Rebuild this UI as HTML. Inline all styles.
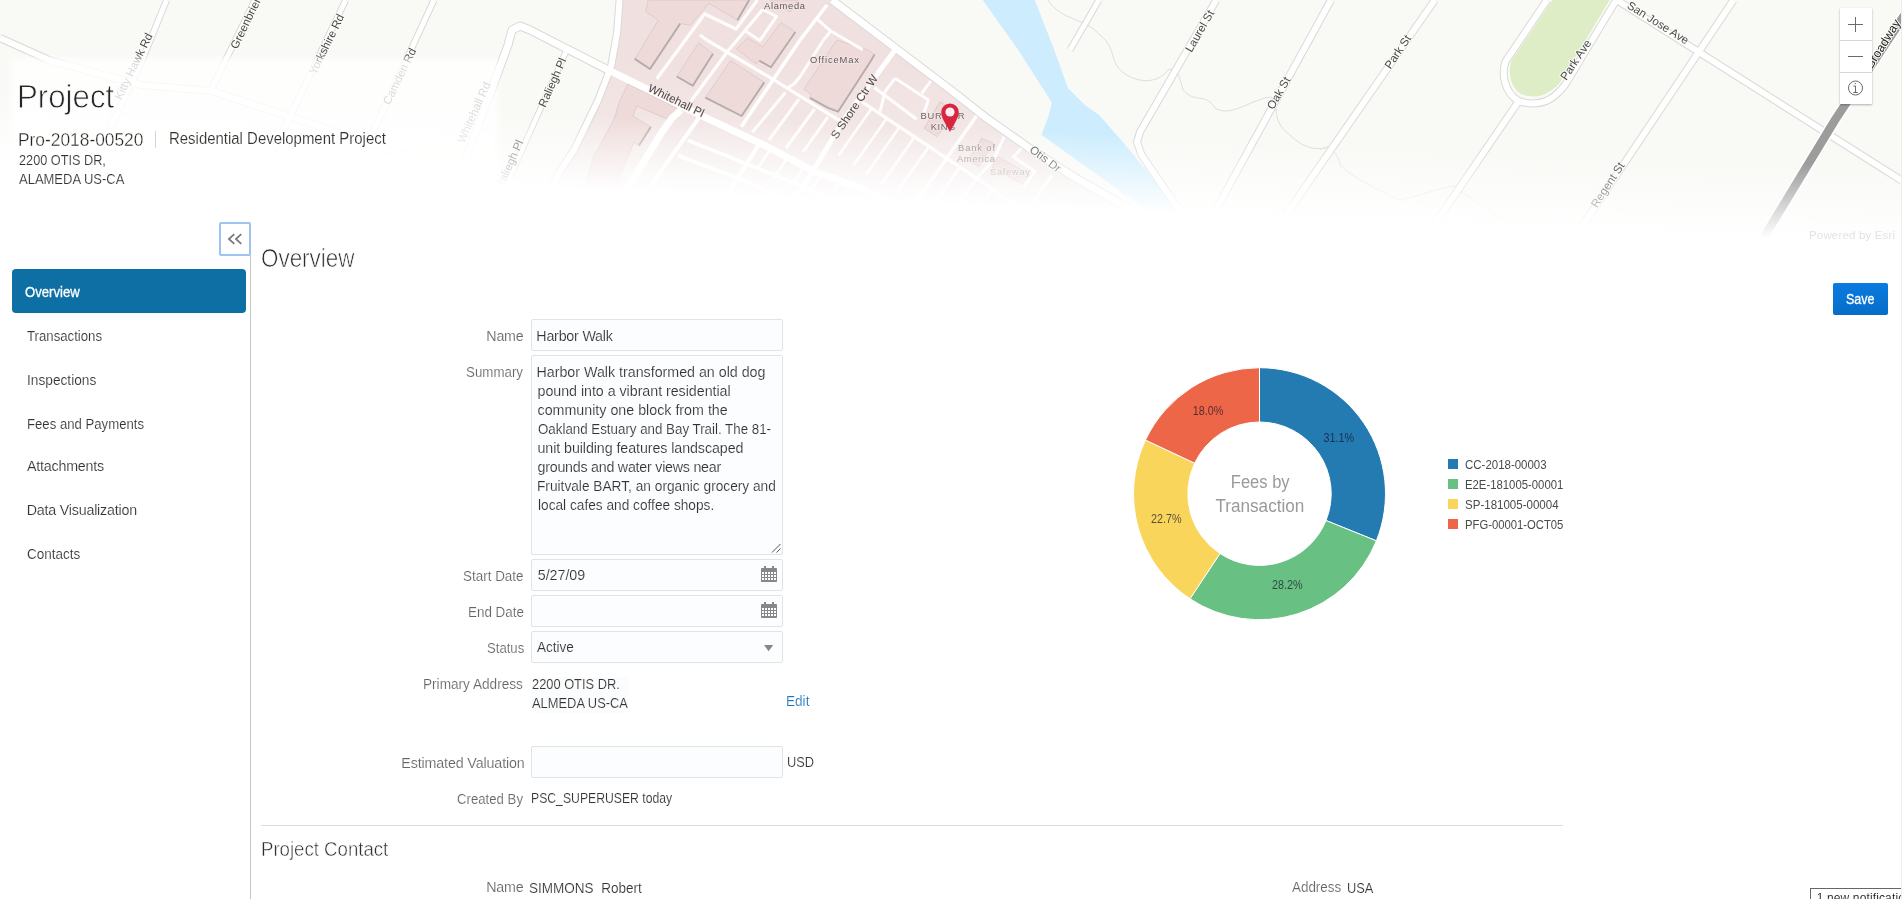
<!DOCTYPE html>
<html lang="en"><head><meta charset="utf-8"><title>Project</title>
<style>
html,body{margin:0;padding:0;background:#fff}
body{width:1902px;height:899px;overflow:hidden;position:relative;font-family:"Liberation Sans", Arial, sans-serif;font-size:14px;color:#333}
.t{position:absolute;white-space:pre;line-height:normal;transform-origin:0 50%}
.t{-webkit-text-stroke:0.15px #fff;paint-order:fill stroke}
#t_proid{-webkit-text-stroke-width:0.35px}
.t.thin{-webkit-text-stroke:0.8px #fff;paint-order:fill stroke}
#h_over{-webkit-text-stroke-width:0.65px}
#h_pc{-webkit-text-stroke-width:0.5px}
.t.semi{-webkit-text-stroke:0.3px currentColor}

#map{position:absolute;left:0;top:0}
#titlebg{position:absolute;left:15px;top:63px;width:478px;height:160px;background:rgba(255,255,255,.8);box-shadow:0 0 6px 5px rgba(255,255,255,.8)}
#sep{position:absolute;left:155px;top:131px;width:1px;height:17px;background:#c9d8e6}
#zoomctl{position:absolute;left:1840px;top:8px;width:32px;height:96px;background:#fff;box-shadow:0 1px 2px rgba(0,0,0,.3)}
#zoomctl div{position:absolute;left:0;width:32px;height:1px;background:#d6d6d6}
#zoomctl svg{position:absolute;left:0;top:0}
#collapse{position:absolute;left:219.2px;top:222px;width:27.8px;height:29.9px;border:2px solid #9dc4f1;border-radius:2px;background:#fff}
#vline{position:absolute;left:250px;top:255px;width:1px;height:644px;background:#c6c6c6}
#navsel{position:absolute;left:12px;top:269px;width:234px;height:44px;border-radius:4px;background:#0e6fa5}
.box{position:absolute;left:531px;width:250px;height:30px;border:1px solid #dfe4e7;border-radius:2px;background:#fcfdfe}
.cal{position:absolute;left:229px;top:6px}
#addrbg{position:absolute;left:531px;top:677px;width:98px;height:36px;background:#fbfcfd}
#hr{position:absolute;left:261px;top:825px;width:1302px;height:1px;background:#d6dfe6}
#save{position:absolute;left:1833px;top:283px;width:55px;height:32px;border-radius:2px;background:linear-gradient(#0a7be0,#066dc8)}
#chart{position:absolute;left:1100px;top:340px}
#notif{position:absolute;left:1810px;top:888px;width:120px;height:30px;border:1px solid #666;background:#fff}
#redge{position:absolute;left:1901px;top:0;width:1px;height:899px;background:#eee}
#page{position:absolute;left:0;top:0;width:1902px;height:899px;overflow:hidden;will-change:transform;background:#fff}
</style></head><body><div id="page">
<svg id="map" width="1902" height="250" viewBox="0 0 1902 250">
<defs><linearGradient id="fade" gradientUnits="userSpaceOnUse" x1="500" y1="110" x2="500" y2="186"><stop offset="0" stop-color="#fff" stop-opacity="0"/><stop offset="1" stop-color="#fff" stop-opacity="1"/></linearGradient>
<linearGradient id="pinkg" gradientUnits="userSpaceOnUse" x1="0" y1="60" x2="0" y2="200"><stop offset="0" stop-color="#f0e1e0"/><stop offset="1" stop-color="#f5ecec"/></linearGradient>
</defs>
<rect width="1902" height="250" fill="#f9faf6"/>
<polygon points="619.6,0.0 832.0,0.0 950.8,90.0 987.7,118.9 1029.0,148.0 1073.7,176.7 1120.0,203.5 1190.0,240.0 1190.0,250.0 520.0,250.0 560.0,171.0 574.0,150.0 597.8,101.0 611.0,67.0 617.0,33.6" fill="url(#pinkg)"/>
<polygon points="982.7,0.0 1018.7,50.7 1052.0,102.8 1048.0,117.5 1041.4,134.8 1098.9,176.0 1147.0,211.0 1200.0,250.0 1215.0,250.0 1173.6,203.0 1147.0,171.0 1120.0,138.8 1098.9,114.8 1085.5,105.5 1068.0,88.0 1053.5,48.0 1034.8,0.0" fill="#cdedfe"/>
<path d="M1552.3 0 L1511 61.4 C1508 72 1510 86 1520 93.5 C1530 98 1541 97 1547 93 C1553 90 1557 86 1560 82.8 L1609.7 0 Z" fill="#deedc6"/>
<path d="M1048 0 C1060 20 1085 18 1100 35 C1118 50 1108 62 1125 74 C1145 86 1160 80 1168 70 C1178 66 1180 80 1183 90 C1195 104 1205 92 1215 108 C1230 118 1250 100 1270 97 C1282 100 1268 120 1290 135 C1305 150 1320 152 1340 144" fill="none" stroke="#deded9" stroke-width="1"/>
<path d="M1320 150 C1330 140 1340 158 1340 165 C1355 180 1380 190 1400 200 C1420 195 1440 188 1455 186 C1470 200 1490 210 1510 222" fill="none" stroke="#e4e4df" stroke-width="1"/>
<path d="M166.6 0.0 L141.0 63.0 L111.0 126.0 L60.0 235.0" fill="none" stroke="#d9d9d6" stroke-width="7.0" stroke-linejoin="round"/>
<path d="M255.0 0.0 L212.0 88.0" fill="none" stroke="#d9d9d6" stroke-width="7.0" stroke-linejoin="round"/>
<path d="M345.7 0.0 L292.7 111.0 L240.0 222.0" fill="none" stroke="#d9d9d6" stroke-width="7.0" stroke-linejoin="round"/>
<path d="M434.0 0.0 L373.5 131.0 L330.0 225.0" fill="none" stroke="#d9d9d6" stroke-width="7.0" stroke-linejoin="round"/>
<path d="M0.0 38.0 L50.0 60.5 L141.0 85.0 L212.0 91.0 L303.0 121.0 L420.0 160.0" fill="none" stroke="#d9d9d6" stroke-width="8.0" stroke-linejoin="round"/>
<path d="M485.0 107.7 L508.0 45.0 L512.0 30.0 L520.0 26.0 L530.0 30.0 L609.5 70.7" fill="none" stroke="#d9d9d6" stroke-width="9.0" stroke-linejoin="round"/>
<path d="M485.0 107.7 L440.0 225.0" fill="none" stroke="#d9d9d6" stroke-width="8.0" stroke-linejoin="round"/>
<path d="M565.8 52.0 L522.0 150.0 L495.0 210.0" fill="none" stroke="#d9d9d6" stroke-width="6.5" stroke-linejoin="round"/>
<path d="M1216.3 0.0 L1140.0 132.0 L1137.0 142.0 L1141.6 155.0 L1181.6 213.6 L1210.0 250.0" fill="none" stroke="#d9d9d6" stroke-width="8.0" stroke-linejoin="round"/>
<path d="M1098.9 0.0 L1070.0 50.0" fill="none" stroke="#d9d9d6" stroke-width="7.0" stroke-linejoin="round"/>
<path d="M1331.0 0.0 L1213.7 213.6 L1195.0 250.0" fill="none" stroke="#d9d9d6" stroke-width="8.0" stroke-linejoin="round"/>
<path d="M1434.8 0.0 L1320.0 165.5 L1262.0 250.0" fill="none" stroke="#d9d9d6" stroke-width="8.0" stroke-linejoin="round"/>
<path d="M1517.6 102.8 L1434.8 224.0 L1417.0 250.0" fill="none" stroke="#d9d9d6" stroke-width="8.0" stroke-linejoin="round"/>
<path d="M1733.5 0.0 L1581.7 227.0 L1566.0 250.0" fill="none" stroke="#d9d9d6" stroke-width="8.0" stroke-linejoin="round"/>
<path d="M1616.7 0.0 L1902.0 180.8" fill="none" stroke="#d9d9d6" stroke-width="8.0" stroke-linejoin="round"/>
<path d="M832.0 0.0 L950.8 90.0 L987.7 118.9 L1029.0 148.0 L1073.7 176.7 L1120.0 203.5 L1190.0 240.0" fill="none" stroke="#d9d9d6" stroke-width="9.0" stroke-linejoin="round"/>
<path d="M619.6 0.0 L617.0 33.6 L611.0 67.0 L597.8 101.0 L574.0 150.0 L560.0 171.0 L520.0 250.0" fill="none" stroke="#d9d9d6" stroke-width="8.0" stroke-linejoin="round"/>
<path d="M1547 0 L1505.6 61.4 C1501 75 1505 92 1517.6 100.5 C1528 105 1542 104 1550 99 C1557 95 1561 90 1565 85 L1616.4 0" fill="none" stroke="#d9d9d6" stroke-width="8"/>
<path d="M166.6 0.0 L141.0 63.0 L111.0 126.0 L60.0 235.0" fill="none" stroke="#fff" stroke-width="5.0" stroke-linejoin="round"/>
<path d="M255.0 0.0 L212.0 88.0" fill="none" stroke="#fff" stroke-width="5.0" stroke-linejoin="round"/>
<path d="M345.7 0.0 L292.7 111.0 L240.0 222.0" fill="none" stroke="#fff" stroke-width="5.0" stroke-linejoin="round"/>
<path d="M434.0 0.0 L373.5 131.0 L330.0 225.0" fill="none" stroke="#fff" stroke-width="5.0" stroke-linejoin="round"/>
<path d="M0.0 38.0 L50.0 60.5 L141.0 85.0 L212.0 91.0 L303.0 121.0 L420.0 160.0" fill="none" stroke="#fff" stroke-width="6.0" stroke-linejoin="round"/>
<path d="M485.0 107.7 L508.0 45.0 L512.0 30.0 L520.0 26.0 L530.0 30.0 L609.5 70.7" fill="none" stroke="#fff" stroke-width="7.0" stroke-linejoin="round"/>
<path d="M485.0 107.7 L440.0 225.0" fill="none" stroke="#fff" stroke-width="6.0" stroke-linejoin="round"/>
<path d="M565.8 52.0 L522.0 150.0 L495.0 210.0" fill="none" stroke="#fff" stroke-width="4.5" stroke-linejoin="round"/>
<path d="M1216.3 0.0 L1140.0 132.0 L1137.0 142.0 L1141.6 155.0 L1181.6 213.6 L1210.0 250.0" fill="none" stroke="#fff" stroke-width="6.0" stroke-linejoin="round"/>
<path d="M1098.9 0.0 L1070.0 50.0" fill="none" stroke="#fff" stroke-width="5.0" stroke-linejoin="round"/>
<path d="M1331.0 0.0 L1213.7 213.6 L1195.0 250.0" fill="none" stroke="#fff" stroke-width="6.0" stroke-linejoin="round"/>
<path d="M1434.8 0.0 L1320.0 165.5 L1262.0 250.0" fill="none" stroke="#fff" stroke-width="6.0" stroke-linejoin="round"/>
<path d="M1517.6 102.8 L1434.8 224.0 L1417.0 250.0" fill="none" stroke="#fff" stroke-width="6.0" stroke-linejoin="round"/>
<path d="M1733.5 0.0 L1581.7 227.0 L1566.0 250.0" fill="none" stroke="#fff" stroke-width="6.0" stroke-linejoin="round"/>
<path d="M1616.7 0.0 L1902.0 180.8" fill="none" stroke="#fff" stroke-width="6.0" stroke-linejoin="round"/>
<path d="M832.0 0.0 L950.8 90.0 L987.7 118.9 L1029.0 148.0 L1073.7 176.7 L1120.0 203.5 L1190.0 240.0" fill="none" stroke="#fff" stroke-width="7.0" stroke-linejoin="round"/>
<path d="M619.6 0.0 L617.0 33.6 L611.0 67.0 L597.8 101.0 L574.0 150.0 L560.0 171.0 L520.0 250.0" fill="none" stroke="#fff" stroke-width="6.0" stroke-linejoin="round"/>
<path d="M1547 0 L1505.6 61.4 C1501 75 1505 92 1517.6 100.5 C1528 105 1542 104 1550 99 C1557 95 1561 90 1565 85 L1616.4 0" fill="none" stroke="#fff" stroke-width="6"/>
<polygon points="730.7,60.6 764.3,82.4 741.6,116.0 705.4,97.6" fill="#eedad8" stroke="#d8c8c7" stroke-width="0.8"/>
<polygon points="836.8,40.0 868.0,50.0 874.6,54.5 870.0,62.2 838.0,111.7 828.0,107.9 810.0,97.8 811.0,94.5 804.0,89.0" fill="#eedad8" stroke="#d8c8c7" stroke-width="0.8"/>
<polygon points="781.0,22.7 795.4,32.0 771.0,67.3 759.3,60.6 756.0,64.0 736.6,48.8 747.5,37.9 762.6,47.0" fill="#eedad8" stroke="#d8c8c7" stroke-width="0.8"/>
<polygon points="648.2,0.0 645.7,11.8 658.3,20.2 634.8,58.9 650.0,69.0 680.2,23.6 690.3,25.2 708.8,3.4 737.4,20.2 749.2,0.0" fill="#eedad8" stroke="#d8c8c7" stroke-width="0.8"/>
<polygon points="698.7,42.9 713.0,53.8 692.8,85.8 676.8,76.5" fill="#eedad8" stroke="#d8c8c7" stroke-width="0.8"/>
<polygon points="628.0,84.0 680.0,109.4 672.0,121.0 636.5,106.0 633.0,116.0 650.8,127.0 639.0,145.4 634.0,142.0 616.0,185.0 585.0,185.0 593.6,157.0 614.6,118.0 619.6,101.0" fill="#eedad8" stroke="#d8c8c7" stroke-width="0.8"/>
<polygon points="770.0,0.0 790.0,12.0 798.0,0.0" fill="#eedad8" stroke="#d8c8c7" stroke-width="0.8"/>
<polygon points="940.0,101.7 956.7,111.7 936.7,136.7 924.2,128.3" fill="#eedad8" stroke="#d8c8c7" stroke-width="0.8"/>
<polygon points="981.7,138.3 993.3,143.3 978.3,166.7 968.3,160.0" fill="#eedad8" stroke="#d8c8c7" stroke-width="0.8"/>
<polygon points="998.3,156.7 1030.0,175.0 1023.3,185.0 991.7,166.7" fill="#eedad8" stroke="#d8c8c7" stroke-width="0.8"/>
<path d="M764.3 82.4 L741.6 116 L705.4 97.6" fill="none" stroke="#b7abab" stroke-width="1.9" stroke-linejoin="round"/>
<path d="M874.6 54.5 L870 62.2 L838 111.7 L828 107.9 L810 97.8" fill="none" stroke="#b7abab" stroke-width="1.9" stroke-linejoin="round"/>
<path d="M713 53.8 L692.8 85.8 L676.8 76.5" fill="none" stroke="#b7abab" stroke-width="1.9" stroke-linejoin="round"/>
<path d="M795.4 32 L771 67.3 L759.3 60.6" fill="none" stroke="#b7abab" stroke-width="1.9" stroke-linejoin="round"/>
<path d="M680.2 23.6 L650 69 L634.8 58.9" fill="none" stroke="#b7abab" stroke-width="1.9" stroke-linejoin="round"/>
<path d="M737.4 20.2 L749.2 0" fill="none" stroke="#b7abab" stroke-width="1.9" stroke-linejoin="round"/>
<path d="M650.8 127 L639 145.4" fill="none" stroke="#b7abab" stroke-width="1.9" stroke-linejoin="round"/>
<path d="M609.5 70.7 L698.7 114.4 L766.0 146.0 L812.4 170.7 L862.8 189.0 L940.0 230.0" fill="none" stroke="#fff" stroke-opacity="1" stroke-width="7.0" stroke-linejoin="round" stroke-linecap="butt"/>
<path d="M894.6 50.5 L843.5 120.0 L825.6 150.0 L799.0 194.0 L770.0 240.0" fill="none" stroke="#fff" stroke-opacity="1" stroke-width="5.0" stroke-linejoin="round" stroke-linecap="butt"/>
<path d="M706.7 40.0 L772.3 78.9 L836.8 119.0 L843.0 122.0" fill="none" stroke="#fff" stroke-opacity="0.88" stroke-width="3.3" stroke-linejoin="round" stroke-linecap="butt"/>
<path d="M700.0 35.0 L706.7 40.0" fill="none" stroke="#fff" stroke-opacity="0.88" stroke-width="3.3" stroke-linejoin="round" stroke-linecap="butt"/>
<path d="M800.1 40.0 L741.2 126.8" fill="none" stroke="#fff" stroke-opacity="1" stroke-width="3.5" stroke-linejoin="round" stroke-linecap="butt"/>
<path d="M827.0 5.0 L800.1 40.0" fill="none" stroke="#fff" stroke-opacity="1" stroke-width="3.5" stroke-linejoin="round" stroke-linecap="butt"/>
<path d="M823.5 40.0 L800.0 76.7 L794.0 84.0 L787.9 87.8" fill="none" stroke="#fff" stroke-opacity="0.88" stroke-width="3.0" stroke-linejoin="round" stroke-linecap="butt"/>
<path d="M830.7 31.0 L823.5 40.0" fill="none" stroke="#fff" stroke-opacity="0.88" stroke-width="3.0" stroke-linejoin="round" stroke-linecap="butt"/>
<path d="M815.5 17.7 L830.7 31.0 L862.6 49.6" fill="none" stroke="#fff" stroke-opacity="0.88" stroke-width="3.0" stroke-linejoin="round" stroke-linecap="butt"/>
<path d="M785.6 92.3 L752.3 132.3" fill="none" stroke="#fff" stroke-opacity="0.88" stroke-width="3.0" stroke-linejoin="round" stroke-linecap="butt"/>
<path d="M799.0 99.0 L769.0 140.0" fill="none" stroke="#fff" stroke-opacity="0.88" stroke-width="3.0" stroke-linejoin="round" stroke-linecap="butt"/>
<path d="M814.6 109.0 L786.0 148.0" fill="none" stroke="#fff" stroke-opacity="0.88" stroke-width="3.0" stroke-linejoin="round" stroke-linecap="butt"/>
<path d="M828.0 116.8 L803.0 152.0" fill="none" stroke="#fff" stroke-opacity="0.88" stroke-width="3.0" stroke-linejoin="round" stroke-linecap="butt"/>
<path d="M762.6 9.5 L727.3 51.7 L690.0 102.6" fill="none" stroke="#fff" stroke-opacity="0.88" stroke-width="3.3" stroke-linejoin="round" stroke-linecap="butt"/>
<path d="M703.8 15.0 L656.6 79.0" fill="none" stroke="#fff" stroke-opacity="0.88" stroke-width="3.3" stroke-linejoin="round" stroke-linecap="butt"/>
<path d="M703.3 13.2 L736.0 29.0 L757.5 0.0" fill="none" stroke="#fff" stroke-opacity="0.88" stroke-width="3.2" stroke-linejoin="round" stroke-linecap="butt"/>
<path d="M874.2 87.5 L916.7 119.2" fill="none" stroke="#fff" stroke-opacity="0.88" stroke-width="3.2" stroke-linejoin="round" stroke-linecap="butt"/>
<path d="M861.7 101.7 L946.7 158.3 L976.7 178.3 L1006.7 199.8 L1040.0 222.0" fill="none" stroke="#fff" stroke-opacity="0.88" stroke-width="3.4" stroke-linejoin="round" stroke-linecap="butt"/>
<path d="M699.6 116.8 L654.0 180.8 L620.0 240.0" fill="none" stroke="#fff" stroke-opacity="1" stroke-width="4.0" stroke-linejoin="round" stroke-linecap="butt"/>
<path d="M681.0 110.0 L672.0 118.0 L661.0 133.6 L632.0 180.8 L600.0 240.0" fill="none" stroke="#fff" stroke-opacity="1" stroke-width="7.0" stroke-linejoin="round" stroke-linecap="butt"/>
<path d="M687.9 140.4 L805.6 187.5 L880.0 225.0" fill="none" stroke="#fff" stroke-opacity="1" stroke-width="3.5" stroke-linejoin="round" stroke-linecap="butt"/>
<path d="M677.8 155.5 L745.0 180.8 L830.0 220.0" fill="none" stroke="#fff" stroke-opacity="1" stroke-width="3.5" stroke-linejoin="round" stroke-linecap="butt"/>
<path d="M758.5 145.4 L731.6 187.5 L700.0 240.0" fill="none" stroke="#fff" stroke-opacity="1" stroke-width="4.0" stroke-linejoin="round" stroke-linecap="butt"/>
<path d="M895.0 78.3 L928.3 100.0 L921.7 119.2" fill="none" stroke="#fff" stroke-opacity="0.88" stroke-width="3.0" stroke-linejoin="round" stroke-linecap="butt"/>
<path d="M895.0 78.3 L885.0 91.7 L880.0 111.7" fill="none" stroke="#fff" stroke-opacity="0.88" stroke-width="3.0" stroke-linejoin="round" stroke-linecap="butt"/>
<path d="M930.8 80.8 L921.7 93.3" fill="none" stroke="#fff" stroke-opacity="0.88" stroke-width="3.0" stroke-linejoin="round" stroke-linecap="butt"/>
<path d="M976.7 115.8 L946.7 158.3 L926.7 186.7 L910.0 210.0" fill="none" stroke="#fff" stroke-opacity="0.88" stroke-width="3.3" stroke-linejoin="round" stroke-linecap="butt"/>
<path d="M1004.2 136.7 L996.7 153.3 L990.0 164.0 L976.7 178.3" fill="none" stroke="#fff" stroke-opacity="0.88" stroke-width="3.0" stroke-linejoin="round" stroke-linecap="butt"/>
<path d="M1021.7 148.3 L1013.3 156.7 L1035.0 171.7 L1023.3 186.7" fill="none" stroke="#fff" stroke-opacity="0.88" stroke-width="3.0" stroke-linejoin="round" stroke-linecap="butt"/>
<path d="M1052.0 175.3 L1031.8 204.2" fill="none" stroke="#fff" stroke-opacity="0.88" stroke-width="3.0" stroke-linejoin="round" stroke-linecap="butt"/>
<path d="M762.6 9.5 L776.5 16.4 L760.0 40.4 L746.2 31.5" fill="none" stroke="#fff" stroke-opacity="0.88" stroke-width="3.0" stroke-linejoin="round" stroke-linecap="butt"/>
<path d="M871.7 108.3 L838.7 155.3" fill="none" stroke="#fff" stroke-opacity="0.88" stroke-width="2.6" stroke-linejoin="round" stroke-linecap="butt"/>
<path d="M886.7 118.3 L853.7 165.3" fill="none" stroke="#fff" stroke-opacity="0.88" stroke-width="2.6" stroke-linejoin="round" stroke-linecap="butt"/>
<path d="M899.2 127.5 L866.2 174.5" fill="none" stroke="#fff" stroke-opacity="0.88" stroke-width="2.6" stroke-linejoin="round" stroke-linecap="butt"/>
<path d="M914.2 137.5 L881.2 184.5" fill="none" stroke="#fff" stroke-opacity="0.88" stroke-width="2.6" stroke-linejoin="round" stroke-linecap="butt"/>
<path d="M928.3 147.5 L895.3 194.5" fill="none" stroke="#fff" stroke-opacity="0.88" stroke-width="2.6" stroke-linejoin="round" stroke-linecap="butt"/>
<path d="M959.2 168.3 L926.2 215.3" fill="none" stroke="#fff" stroke-opacity="0.88" stroke-width="2.6" stroke-linejoin="round" stroke-linecap="butt"/>
<path d="M976.7 178.3 L943.7 225.3" fill="none" stroke="#fff" stroke-opacity="0.88" stroke-width="2.6" stroke-linejoin="round" stroke-linecap="butt"/>
<path d="M992.0 189.0 L959.0 236.0" fill="none" stroke="#fff" stroke-opacity="0.88" stroke-width="2.6" stroke-linejoin="round" stroke-linecap="butt"/>
<path d="M770.0 150.0 L757.0 169.0" fill="none" stroke="#fff" stroke-opacity="0.88" stroke-width="2.6" stroke-linejoin="round" stroke-linecap="butt"/>
<path d="M787.0 158.5 L774.0 177.5" fill="none" stroke="#fff" stroke-opacity="0.88" stroke-width="2.6" stroke-linejoin="round" stroke-linecap="butt"/>
<path d="M804.0 167.0 L791.0 186.0" fill="none" stroke="#fff" stroke-opacity="0.88" stroke-width="2.6" stroke-linejoin="round" stroke-linecap="butt"/>
<path d="M821.0 175.5 L808.0 194.5" fill="none" stroke="#fff" stroke-opacity="0.88" stroke-width="2.6" stroke-linejoin="round" stroke-linecap="butt"/>
<path d="M838.0 184.0 L825.0 203.0" fill="none" stroke="#fff" stroke-opacity="0.88" stroke-width="2.6" stroke-linejoin="round" stroke-linecap="butt"/>
<path d="M1914 0 L1907 11.3 L1835 120 L1761 242 L1752 257" fill="none" stroke="#fff" stroke-width="11.5"/>
<path d="M1914 0 L1907 11.3 L1835 120 L1761 242 L1752 257" fill="none" stroke="#9c9c9c" stroke-width="8.6"/>
<g font-family="'Liberation Sans',Arial,sans-serif" style="paint-order:stroke" stroke="#fbfbf8" stroke-width="2" stroke-linejoin="round">
<text x="137.0" y="68.0" transform="rotate(-64.0 137.0 68.0)" font-size="11.5" fill="#4a4a4a" text-anchor="middle" opacity="1">Kitty Hawk Rd</text>
<text x="253.0" y="17.0" transform="rotate(-64.0 253.0 17.0)" font-size="11.5" fill="#4a4a4a" text-anchor="middle" opacity="1">Greenbrier Rd</text>
<text x="330.0" y="46.0" transform="rotate(-64.0 330.0 46.0)" font-size="11.5" fill="#4a4a4a" text-anchor="middle" opacity="1">Yorkshire Rd</text>
<text x="403.0" y="78.0" transform="rotate(-64.0 403.0 78.0)" font-size="11.5" fill="#4a4a4a" text-anchor="middle" opacity="1">Camden Rd</text>
<text x="477.5" y="114.0" transform="rotate(-66.0 477.5 114.0)" font-size="11.5" fill="#4a4a4a" text-anchor="middle" opacity="1">Whitehall Rd</text>
<text x="556.0" y="84.0" transform="rotate(-66.0 556.0 84.0)" font-size="11.5" fill="#4a4a4a" text-anchor="middle" opacity="1">Raliegh Pl</text>
<text x="513.0" y="166.0" transform="rotate(-66.0 513.0 166.0)" font-size="11.5" fill="#4a4a4a" text-anchor="middle" opacity="1">Raliegh Pl</text>
<text x="1203.0" y="33.0" transform="rotate(-60.0 1203.0 33.0)" font-size="11.5" fill="#4a4a4a" text-anchor="middle" opacity="1">Laurel St</text>
<text x="1282.0" y="95.0" transform="rotate(-60.0 1282.0 95.0)" font-size="11.5" fill="#4a4a4a" text-anchor="middle" opacity="1">Oak St</text>
<text x="1401.0" y="54.0" transform="rotate(-56.0 1401.0 54.0)" font-size="11.5" fill="#4a4a4a" text-anchor="middle" opacity="1">Park St</text>
<text x="1579.0" y="62.0" transform="rotate(-56.0 1579.0 62.0)" font-size="11.5" fill="#4a4a4a" text-anchor="middle" opacity="1">Park Ave</text>
<text x="1656.0" y="26.0" transform="rotate(32.0 1656.0 26.0)" font-size="11.5" fill="#4a4a4a" text-anchor="middle" opacity="1">San Jose Ave</text>
<text x="1611.0" y="187.0" transform="rotate(-57.0 1611.0 187.0)" font-size="11.5" fill="#4a4a4a" text-anchor="middle" opacity="1">Regent St</text>
<text x="1886.5" y="46.0" transform="rotate(-58.0 1886.5 46.0)" font-size="12.3" fill="#222" text-anchor="middle" opacity="1">Broadway</text>
<text x="1043.0" y="162.0" transform="rotate(37.0 1043.0 162.0)" font-size="11.5" fill="#4a4a4a" text-anchor="middle" opacity="1">Otis Dr</text>
</g>
<g font-family="'Liberation Sans',Arial,sans-serif" style="paint-order:stroke" stroke="#f6e6e5" stroke-width="1.5" stroke-linejoin="round">
<text x="674.5" y="104.0" transform="rotate(26.0 674.5 104.0)" font-size="11.5" fill="#4a4a4a" text-anchor="middle" opacity="1">Whitehall Pl</text>
<text x="857.5" y="109.0" transform="rotate(-56.0 857.5 109.0)" font-size="11.5" fill="#4a4a4a" text-anchor="middle" opacity="1">S Shore Ctr W</text>
<text x="784.5" y="8.6" font-size="9.4" fill="#5a5a5a" text-anchor="middle" textLength="41" lengthAdjust="spacing">Alameda</text>
<text x="834.5" y="62.5" font-size="9.4" fill="#5a5a5a" text-anchor="middle" textLength="49" lengthAdjust="spacing">OfficeMax</text>
<text x="942.5" y="118.8" font-size="9.4" fill="#6a6a6a" text-anchor="middle" textLength="44" lengthAdjust="spacing">BURGER</text>
<text x="943.0" y="129.5" font-size="9.4" fill="#6a6a6a" text-anchor="middle" textLength="24.5" lengthAdjust="spacing">KING</text>
<text x="976.5" y="150.8" font-size="9.4" fill="#8a8a8a" text-anchor="middle" textLength="37" lengthAdjust="spacing">Bank of</text>
<text x="976.0" y="161.6" font-size="9.4" fill="#8a8a8a" text-anchor="middle" textLength="38" lengthAdjust="spacing">America</text>
<text x="1010.0" y="174.6" font-size="9.4" fill="#9a9a9a" text-anchor="middle" textLength="40" lengthAdjust="spacing">Safeway</text>
</g>
<path d="M950 132 C946 124 941.2 118 941.2 112.3 A8.8 8.8 0 1 1 958.8 112.3 C958.8 118 954 124 950 132 Z" fill="#d8263f"/>
<circle cx="950" cy="112" r="4.6" fill="#fff" fill-opacity="0.92"/>
<rect x="-200" y="-100" width="2400" height="600" fill="url(#fade)" transform="rotate(2.35 500 186)"/>
<text x="1809" y="238.6" font-family="'Liberation Sans',Arial,sans-serif" font-size="11.5" fill="#e3e3e3" textLength="86">Powered by Esri</text>
</svg>
<div id="titlebg"></div>
<header>
<span id="t_project" class="t thin" style="left:17.45px;top:77.00px;font-size:33.8px;letter-spacing:0.000px;color:#262626;transform:scaleX(0.9239)">Project</span>
<span id="t_proid" class="t" style="left:17.75px;top:128.60px;font-size:18.3px;letter-spacing:0.000px;color:#222;transform:scaleX(0.9491)">Pro-2018-00520</span><div id="sep"></div><span id="t_rdp" class="t" style="left:168.54px;top:129.70px;font-size:15.6px;letter-spacing:0.000px;color:#333;transform:scaleX(0.9584)">Residential Development Project</span>
<span id="t_addr1" class="t" style="left:18.70px;top:151.70px;font-size:14.2px;letter-spacing:0.000px;color:#333;transform:scaleX(0.8954)">2200 OTIS DR,</span>
<span id="t_addr2" class="t" style="left:18.70px;top:170.70px;font-size:14.2px;letter-spacing:0.000px;color:#333;transform:scaleX(0.9156)">ALAMEDA US-CA</span>
</header>
<div id="zoomctl"><div style="top:32px"></div><div style="top:64px"></div>
<svg width="32" height="96" viewBox="0 0 32 96" fill="none" stroke="#6a6a6a" stroke-width="1"><path d="M8 16.5h15M15.5 9v15M8 48.5h15"/><circle cx="15.5" cy="80" r="7"/><path d="M15.5 78v6M13.5 78h2M13.3 84.5h4.4" /><circle cx="15.4" cy="75.6" r="0.7" fill="#6a6a6a" stroke="none"/></svg></div>
<div id="collapse"><svg width="28" height="30" viewBox="0 0 28 30" style="position:absolute;left:0;top:0" fill="none" stroke="#777" stroke-width="1.7"><path d="M13.3 10.2L7.9 15l5.4 4.8M20.3 10.2l-5.4 4.8 5.4 4.8"/></svg></div>
<div id="vline"></div>
<nav>
<div id="navsel"></div>
<span id="n0" class="t semi" style="left:25.00px;top:283.80px;font-size:14.25px;letter-spacing:0.000px;color:#fff;transform:scaleX(0.9202)">Overview</span>
<span id="n1" class="t" style="left:26.90px;top:328.10px;font-size:14.25px;letter-spacing:0.000px;color:#333;transform:scaleX(0.9256)">Transactions</span>
<span id="n2" class="t" style="left:26.54px;top:372.40px;font-size:14.25px;letter-spacing:0.000px;color:#333;transform:scaleX(0.9611)">Inspections</span>
<span id="n3" class="t" style="left:26.78px;top:416.30px;font-size:14.25px;letter-spacing:0.000px;color:#333;transform:scaleX(0.9235)">Fees and Payments</span>
<span id="n4" class="t" style="left:26.90px;top:458.20px;font-size:14.25px;letter-spacing:-0.188px;color:#333">Attachments</span>
<span id="n5" class="t" style="left:26.70px;top:502.20px;font-size:14.25px;letter-spacing:-0.199px;color:#333">Data Visualization</span>
<span id="n6" class="t" style="left:26.90px;top:546.20px;font-size:14.25px;letter-spacing:0.000px;color:#333;transform:scaleX(0.9481)">Contacts</span>
</nav>
<main>
<span id="h_over" class="t thin" style="left:260.90px;top:243.80px;font-size:25px;letter-spacing:0.000px;color:#2e2e2e;transform:scaleX(0.8969)">Overview</span>
<div id="save"></div><span id="b_save" class="t semi" style="left:1845.90px;top:291.00px;font-size:14.25px;letter-spacing:0.000px;color:#fff;transform:scaleX(0.8785)">Save</span>
<div class="box" style="top:319px"></div><span id="l_name" class="t" style="left:486.30px;top:327.70px;font-size:14.25px;letter-spacing:-0.195px;color:#666">Name</span><span id="v_name" class="t" style="left:536.30px;top:327.70px;font-size:14.25px;letter-spacing:-0.203px;color:#333">Harbor Walk</span>
<div class="box" style="top:355px;height:198px"><svg width="10" height="10" viewBox="0 0 10 10" style="position:absolute;right:1px;bottom:1px" stroke="#555" stroke-width="1"><path d="M9.5 1L1 9.5M9.5 5.5L5.5 9.5"/></svg></div><span id="l_sum" class="t" style="left:466.00px;top:364.20px;font-size:14.25px;letter-spacing:0.000px;color:#666;transform:scaleX(0.9347)">Summary</span>
<span id="v_s1" class="t" style="left:536.50px;top:364.20px;font-size:14.25px;letter-spacing:-0.007px;color:#333">Harbor Walk transformed an old dog</span>
<span id="v_s2" class="t" style="left:537.50px;top:383.20px;font-size:14.25px;letter-spacing:-0.030px;color:#333">pound into a vibrant residential</span>
<span id="v_s3" class="t" style="left:537.50px;top:402.20px;font-size:14.25px;letter-spacing:0.005px;color:#333">community one block from the</span>
<span id="v_s4" class="t" style="left:537.50px;top:421.20px;font-size:14.25px;letter-spacing:0.000px;color:#333;transform:scaleX(0.9348)">Oakland Estuary and Bay Trail. The 81-</span>
<span id="v_s5" class="t" style="left:537.50px;top:440.20px;font-size:14.25px;letter-spacing:-0.076px;color:#333">unit building features landscaped</span>
<span id="v_s6" class="t" style="left:537.50px;top:459.20px;font-size:14.25px;letter-spacing:-0.236px;color:#333">grounds and water views near</span>
<span id="v_s7" class="t" style="left:536.54px;top:478.20px;font-size:14.25px;letter-spacing:0.000px;color:#333;transform:scaleX(0.9614)">Fruitvale BART, an organic grocery and</span>
<span id="v_s8" class="t" style="left:537.50px;top:497.20px;font-size:14.25px;letter-spacing:0.000px;color:#333;transform:scaleX(0.9602)">local cafes and coffee shops.</span>
<div class="box" style="top:559px"><svg class="cal" width="16" height="16" viewBox="0 0 16 16"><rect x="0" y="2" width="16" height="14" rx="0.8" fill="#858789"/><rect x="3" y="0" width="2" height="3" fill="#858789"/><rect x="11" y="0" width="2" height="3" fill="#858789"/><rect x="1" y="6" width="2" height="2" fill="#fcfdfe"/><rect x="4" y="6" width="2" height="2" fill="#fcfdfe"/><rect x="7" y="6" width="2" height="2" fill="#fcfdfe"/><rect x="10" y="6" width="2" height="2" fill="#fcfdfe"/><rect x="13" y="6" width="2" height="2" fill="#fcfdfe"/><rect x="1" y="9" width="2" height="2" fill="#fcfdfe"/><rect x="4" y="9" width="2" height="2" fill="#fcfdfe"/><rect x="7" y="9" width="2" height="2" fill="#fcfdfe"/><rect x="10" y="9" width="2" height="2" fill="#fcfdfe"/><rect x="13" y="9" width="2" height="2" fill="#fcfdfe"/><rect x="1" y="12" width="2" height="2" fill="#fcfdfe"/><rect x="4" y="12" width="2" height="2" fill="#fcfdfe"/><rect x="7" y="12" width="2" height="2" fill="#fcfdfe"/><rect x="10" y="12" width="2" height="2" fill="#fcfdfe"/><rect x="13" y="12" width="2" height="2" fill="#fcfdfe"/></svg></div><span id="l_sd" class="t" style="left:463.20px;top:568.00px;font-size:14.25px;letter-spacing:0.000px;color:#666;transform:scaleX(0.9435)">Start Date</span><span id="v_sd" class="t" style="left:537.80px;top:567.00px;font-size:14.25px;letter-spacing:-0.036px;color:#333">5/27/09</span>
<div class="box" style="top:595px"><svg class="cal" width="16" height="16" viewBox="0 0 16 16"><rect x="0" y="2" width="16" height="14" rx="0.8" fill="#858789"/><rect x="3" y="0" width="2" height="3" fill="#858789"/><rect x="11" y="0" width="2" height="3" fill="#858789"/><rect x="1" y="6" width="2" height="2" fill="#fcfdfe"/><rect x="4" y="6" width="2" height="2" fill="#fcfdfe"/><rect x="7" y="6" width="2" height="2" fill="#fcfdfe"/><rect x="10" y="6" width="2" height="2" fill="#fcfdfe"/><rect x="13" y="6" width="2" height="2" fill="#fcfdfe"/><rect x="1" y="9" width="2" height="2" fill="#fcfdfe"/><rect x="4" y="9" width="2" height="2" fill="#fcfdfe"/><rect x="7" y="9" width="2" height="2" fill="#fcfdfe"/><rect x="10" y="9" width="2" height="2" fill="#fcfdfe"/><rect x="13" y="9" width="2" height="2" fill="#fcfdfe"/><rect x="1" y="12" width="2" height="2" fill="#fcfdfe"/><rect x="4" y="12" width="2" height="2" fill="#fcfdfe"/><rect x="7" y="12" width="2" height="2" fill="#fcfdfe"/><rect x="10" y="12" width="2" height="2" fill="#fcfdfe"/><rect x="13" y="12" width="2" height="2" fill="#fcfdfe"/></svg></div><span id="l_ed" class="t" style="left:467.76px;top:603.90px;font-size:14.25px;letter-spacing:0.000px;color:#666;transform:scaleX(0.9421)">End Date</span>
<div class="box" style="top:631px"><svg width="10" height="7" viewBox="0 0 10 7" style="position:absolute;left:232px;top:13px"><path d="M0 0h9.2L4.6 6.2z" fill="#858789"/></svg></div><span id="l_st" class="t" style="left:486.70px;top:639.80px;font-size:14.25px;letter-spacing:0.000px;color:#666;transform:scaleX(0.9212)">Status</span><span id="v_st" class="t" style="left:537.40px;top:638.70px;font-size:14.25px;letter-spacing:0.000px;color:#333;transform:scaleX(0.9491)">Active</span>
<div id="addrbg"></div><span id="l_pa" class="t" style="left:423.24px;top:675.80px;font-size:14.25px;letter-spacing:0.000px;color:#666;transform:scaleX(0.9559)">Primary Address</span><span id="v_pa1" class="t" style="left:531.60px;top:676.00px;font-size:14.25px;letter-spacing:0.000px;color:#333;transform:scaleX(0.9010)">2200 OTIS DR.</span><span id="v_pa2" class="t" style="left:531.60px;top:695.00px;font-size:14.25px;letter-spacing:0.000px;color:#333;transform:scaleX(0.9042)">ALMEDA US-CA</span><span id="v_edit" class="t" style="left:786.45px;top:693.00px;font-size:14.25px;letter-spacing:0.000px;color:#1b75bb;transform:scaleX(0.9536)">Edit</span>
<div class="box" style="top:746px"></div><span id="l_ev" class="t" style="left:401.30px;top:755.00px;font-size:14.25px;letter-spacing:-0.125px;color:#666">Estimated Valuation</span><span id="v_usd" class="t" style="left:786.50px;top:754.00px;font-size:14.25px;letter-spacing:0.000px;color:#333;transform:scaleX(0.8994)">USD</span>
<span id="l_cb" class="t" style="left:457.00px;top:790.80px;font-size:14.25px;letter-spacing:0.000px;color:#666;transform:scaleX(0.9257)">Created By</span><span id="v_cb" class="t" style="left:530.74px;top:789.60px;font-size:14.25px;letter-spacing:0.000px;color:#333;transform:scaleX(0.8572)">PSC_SUPERUSER today</span>
<div id="hr"></div>
<span id="h_pc" class="t thin" style="left:260.89px;top:836.70px;font-size:20.5px;letter-spacing:0.000px;color:#2e2e2e;transform:scaleX(0.9078)">Project Contact</span>
<span id="l_cn" class="t" style="left:486.30px;top:878.60px;font-size:14.25px;letter-spacing:-0.229px;color:#666">Name</span><span id="v_cn" class="t" style="left:529.20px;top:879.80px;font-size:14.25px;letter-spacing:0.000px;color:#333;transform:scaleX(0.9494)">SIMMONS&nbsp; Robert</span><span id="l_ad" class="t" style="left:1291.50px;top:878.80px;font-size:14.25px;letter-spacing:0.000px;color:#666;transform:scaleX(0.9415)">Address</span><span id="v_ad" class="t" style="left:1347.10px;top:879.50px;font-size:14.25px;letter-spacing:0.000px;color:#333;transform:scaleX(0.8994)">USA</span>
<svg id="chart" width="520" height="300" viewBox="1100 340 520 300" font-family="'Liberation Sans',Arial,sans-serif">
<path d="M1259.50 367.70 A126 126 0 0 1 1376.36 540.82 L1326.00 520.51 A71.7 71.7 0 0 0 1259.50 422.00 Z" fill="#237bb1" stroke="#fff" stroke-width="1"/>
<path d="M1376.36 540.82 A126 126 0 0 1 1189.99 598.79 L1219.95 553.50 A71.7 71.7 0 0 0 1326.00 520.51 Z" fill="#68c182" stroke="#fff" stroke-width="1"/>
<path d="M1189.99 598.79 A126 126 0 0 1 1145.49 440.05 L1194.62 463.17 A71.7 71.7 0 0 0 1219.95 553.50 Z" fill="#fad55c" stroke="#fff" stroke-width="1"/>
<path d="M1145.49 440.05 A126 126 0 0 1 1259.50 367.70 L1259.50 422.00 A71.7 71.7 0 0 0 1194.62 463.17 Z" fill="#ed6647" stroke="#fff" stroke-width="1"/>
<text x="1338.7" y="442.4" font-size="12" fill="#16162a" fill-opacity="0.72" text-anchor="middle" textLength="30.6" lengthAdjust="spacingAndGlyphs">31.1%</text>
<text x="1287.3" y="588.6" font-size="12" fill="#16162a" fill-opacity="0.72" text-anchor="middle" textLength="30.6" lengthAdjust="spacingAndGlyphs">28.2%</text>
<text x="1166.2" y="522.5" font-size="12" fill="#16162a" fill-opacity="0.72" text-anchor="middle" textLength="30.6" lengthAdjust="spacingAndGlyphs">22.7%</text>
<text x="1208.0" y="415.2" font-size="12" fill="#16162a" fill-opacity="0.72" text-anchor="middle" textLength="30.6" lengthAdjust="spacingAndGlyphs">18.0%</text>
<text x="1260.2" y="488.2" font-size="18.3" fill="#9a9a9a" text-anchor="middle" textLength="58.8" lengthAdjust="spacingAndGlyphs">Fees by</text>
<text x="1259.9" y="512.2" font-size="18.3" fill="#9a9a9a" text-anchor="middle" textLength="88.8" lengthAdjust="spacingAndGlyphs">Transaction</text>
<rect x="1448" y="459.0" width="10" height="10" fill="#237bb1"/>
<text x="1465" y="468.5" font-size="12.2" fill="#4a4a4a" textLength="81.6" lengthAdjust="spacingAndGlyphs">CC-2018-00003</text>
<rect x="1448" y="479.0" width="10" height="10" fill="#68c182"/>
<text x="1465" y="488.5" font-size="12.2" fill="#4a4a4a" textLength="98.3" lengthAdjust="spacingAndGlyphs">E2E-181005-00001</text>
<rect x="1448" y="499.0" width="10" height="10" fill="#fad55c"/>
<text x="1465" y="508.5" font-size="12.2" fill="#4a4a4a" textLength="93.6" lengthAdjust="spacingAndGlyphs">SP-181005-00004</text>
<rect x="1448" y="519.0" width="10" height="10" fill="#ed6647"/>
<text x="1465" y="528.5" font-size="12.2" fill="#4a4a4a" textLength="98.3" lengthAdjust="spacingAndGlyphs">PFG-00001-OCT05</text>
</svg>
</main>
<div id="notif"></div><span id="t_notif" class="t" style="left:1816.70px;top:891.00px;font-size:12px;letter-spacing:0.132px;color:#000">1 new notification</span>
<div id="redge"></div>
</div></body></html>
